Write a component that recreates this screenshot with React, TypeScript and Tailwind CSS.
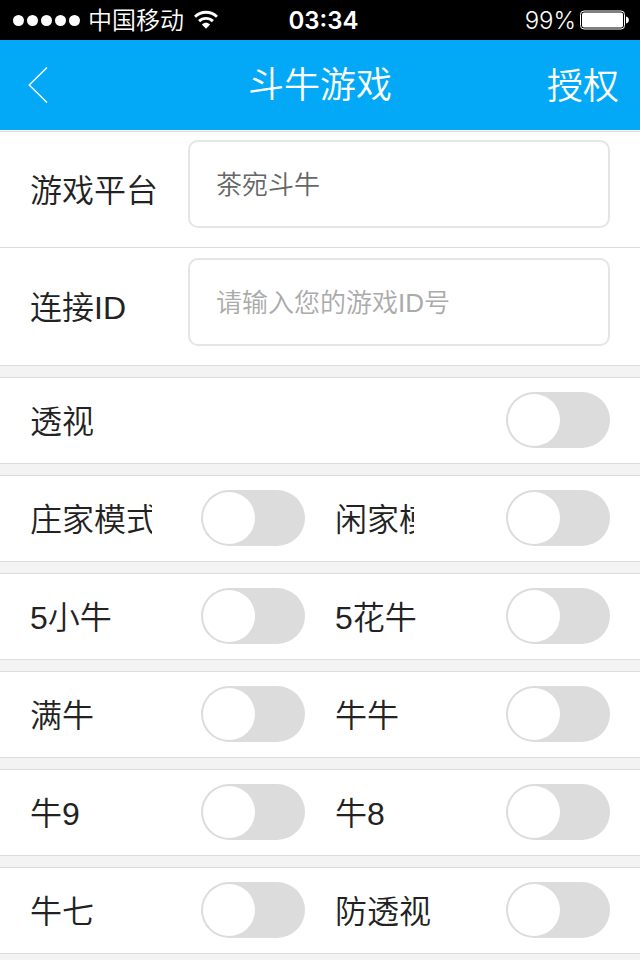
import React from 'react';

type SwitchItem = {
  id: string;
  label: string;
  labelClass?: string;
};

const rows: SwitchItem[][] = [
  [{ id: 'see-through', label: '透视' }],
  [
    { id: 'banker-mode', label: '庄家模式', labelClass: 'w-[122px]' },
    { id: 'player-mode', label: '闲家模式', labelClass: 'w-[79px]' },
  ],
  [
    { id: 'five-small', label: '5小牛' },
    { id: 'five-face', label: '5花牛' },
  ],
  [
    { id: 'full-bull', label: '满牛' },
    { id: 'double-bull', label: '牛牛' },
  ],
  [
    { id: 'bull-nine', label: '牛9' },
    { id: 'bull-eight', label: '牛8' },
  ],
  [
    { id: 'bull-seven', label: '牛七' },
    { id: 'anti-see', label: '防透视' },
  ],
];

const fieldClass =
  'block h-[88px] w-full appearance-none rounded-[10px] border-2 border-[#e5e5e5] bg-white px-[26px] pt-0.5 text-[26px] outline-none';

const StatusBar: React.FC = () => (
  <div className="grid h-10 grid-cols-[1fr_auto_1fr] items-center bg-black pr-[11px] pl-[13px] font-['Inter','Noto_Sans_CJK_SC',sans-serif] text-[24px] leading-9 text-white">
    <div className="flex items-center">
      <div className="flex gap-[3px]">
        {[0, 1, 2, 3, 4].map((dot) => (
          <span key={dot} className="size-[11px] rounded-full bg-white" />
        ))}
      </div>
      <span className="ml-2 pt-0.5 font-[350]">中国移动</span>
      <svg className="ml-2.5 h-5 w-6" viewBox="0 0 24 20" fill="none" aria-hidden="true">
        <path d="M1 6.8C7.2.8 16.8.8 23 6.8" stroke="white" strokeWidth="2.9" />
        <path d="M5.1 11.1C9 7.4 15 7.4 18.9 11.1" stroke="white" strokeWidth="2.9" />
        <path d="M7.9 14.4C10.3 12.2 13.7 12.2 16.1 14.4L12 18.8Z" fill="white" />
      </svg>
    </div>
    <span className="pt-0.5 pl-[5px] font-semibold">03:34</span>
    <div className="flex items-center justify-end">
      <span className="mr-1 pt-0.5 font-light">99%</span>
      <svg className="h-5 w-[49px]" viewBox="0 0 49 20" fill="none" aria-hidden="true">
        <rect x="0.5" y="1" width="44" height="18" rx="3.5" stroke="white" />
        <rect x="2" y="2.5" width="41" height="15" rx="2" fill="white" />
        <path d="M46 6.5C49.8 7.2 49.8 12.8 46 13.5Z" fill="white" />
      </svg>
    </div>
  </div>
);

const NavBar: React.FC = () => (
  <header className="grid h-[90px] grid-cols-[1fr_auto_1fr] items-center bg-[#03a9f6] px-[21px] font-[350] text-[36px] text-white">
    <button type="button" aria-label="返回" className="justify-self-start p-[7px]">
      <svg className="h-9 w-5" viewBox="0 0 20 36" fill="none" aria-hidden="true">
        <path d="M19 0.5L1.2 18L19 35.5" stroke="white" strokeWidth="1.4" />
      </svg>
    </button>
    <h1 className="pt-0.5">斗牛游戏</h1>
    <button type="button" className="justify-self-end pt-1">
      授权
    </button>
  </header>
);

const SwitchCell: React.FC<{ item: SwitchItem }> = ({ item }) => (
  <div className="flex flex-1 items-center justify-between">
    <label htmlFor={item.id} className={`overflow-hidden pt-1 whitespace-nowrap ${item.labelClass ?? ''}`}>
      {item.label}
    </label>
    <input
      id={item.id}
      type="checkbox"
      role="switch"
      className="h-14 w-[104px] shrink-0 appearance-none rounded-full bg-[#dcdcdc] p-0.5 before:block before:size-[52px] before:rounded-full before:bg-white checked:bg-[#03a9f6] checked:before:ml-12"
    />
  </div>
);

export default function App() {
  return (
    <div className="h-screen overflow-hidden bg-[#f3f3f3] font-['Liberation_Sans','Noto_Sans_CJK_SC',sans-serif] font-[350] text-[32px] text-[#222222]">
      <StatusBar />
      <NavBar />
      <main className="flex flex-col gap-[11px]">
        <section className="border-b border-[#dcdcdc] bg-white pt-px">
          <div className="flex border-y border-[#dcdcdc] px-[30px]">
            <label htmlFor="platform" className="flex w-[158px] items-center pt-0.5">
              游戏平台
            </label>
            <div className="flex-1 pt-2 pb-[19px]">
              <select id="platform" className={`${fieldClass} text-[#666666]`}>
                <option>茶宛斗牛</option>
              </select>
            </div>
          </div>
          <div className="flex px-[30px]">
            <label htmlFor="game-id" className="flex w-[158px] items-center pt-0.5">
              连接ID
            </label>
            <div className="flex-1 pt-2.5 pb-[19px]">
              <input
                id="game-id"
                type="text"
                placeholder="请输入您的游戏ID号"
                className={`${fieldClass} placeholder:text-[#aaaaaa]`}
              />
            </div>
          </div>
        </section>
        {rows.map((row) => (
          <section key={row[0].id} className="flex h-[87px] gap-[30px] border-y border-[#dcdcdc] bg-white px-[30px] pb-px">
            {row.map((item) => (
              <SwitchCell key={item.id} item={item} />
            ))}
          </section>
        ))}
      </main>
    </div>
  );
}
